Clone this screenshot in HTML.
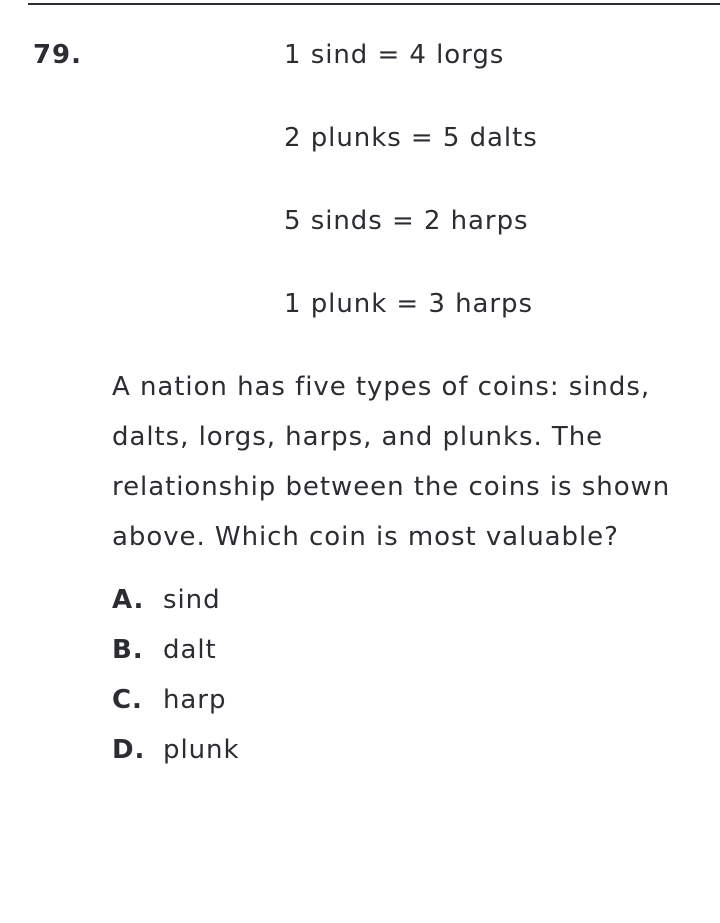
<!DOCTYPE html>
<html><head><style>
body{margin:0;width:720px;height:923px;background:#fff;font-family:"DejaVu Sans","Liberation Sans",sans-serif;color:#2b2d33;font-size:26px;position:relative;overflow:hidden;letter-spacing:0.95px;font-variant-ligatures:none}
.hr{position:absolute;left:28px;right:0;top:3px;height:2px;background:#2b2d33}
.a{position:absolute;white-space:nowrap;line-height:1}
b{font-weight:bold}
</style></head><body>
<div class="hr"></div>
<div class="a" style="left:33px;top:42px"><b>79.</b></div>
<div class="a" style="left:284px;top:42px">1 sind = 4 lorgs</div>
<div class="a" style="left:284px;top:125px">2 plunks = 5 dalts</div>
<div class="a" style="left:284px;top:208px">5 sinds = 2 harps</div>
<div class="a" style="left:284px;top:291px">1 plunk = 3 harps</div>
<div class="a" style="left:112px;top:374px">A nation has five types of coins: sinds,</div>
<div class="a" style="left:112px;top:424px">dalts, lorgs, harps, and plunks. The</div>
<div class="a" style="left:112px;top:474px">relationship between the coins is shown</div>
<div class="a" style="left:112px;top:524px">above. Which coin is most valuable?</div>
<div class="a" style="left:112px;top:587px"><b>A.</b><span style="position:absolute;left:51px">sind</span></div>
<div class="a" style="left:112px;top:637px"><b>B.</b><span style="position:absolute;left:51px">dalt</span></div>
<div class="a" style="left:112px;top:687px"><b>C.</b><span style="position:absolute;left:51px">harp</span></div>
<div class="a" style="left:112px;top:737px"><b>D.</b><span style="position:absolute;left:51px">plunk</span></div>
</body></html>
